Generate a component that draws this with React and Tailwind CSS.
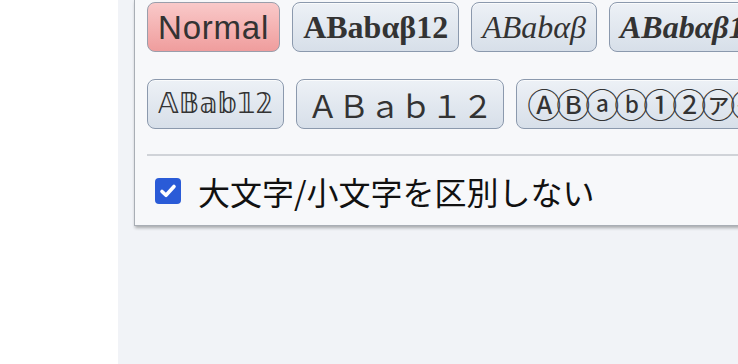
import React from "react";

const btn =
  "shrink-0 h-[50px] rounded-[8px] border border-[#8b99ad] bg-gradient-to-b from-[#edf1f6] to-[#d7dfe9] px-[10px] flex items-center text-[#333] leading-none whitespace-nowrap shadow-[inset_0_1px_0_rgba(255,255,255,0.7)]";

export default function App() {
  return (
    <div className="w-[738px] h-[364px] overflow-hidden bg-white flex">
      <div className="w-[118px] shrink-0 bg-white" />
      <div className="flex-1 bg-[#f1f3f7] pl-[16px] overflow-hidden">
        <div className="w-[900px] bg-[#f7f8fa] border border-t-0 border-[#a9aeb5] shadow-[1px_2px_3px_rgba(0,0,0,0.3)] pl-[12px] pt-[2px] pb-[18px]">
          <div className="flex gap-[12px]">
            <div
              className={
                "shrink-0 h-[50px] rounded-[8px] border border-[#9a9eab] bg-gradient-to-b from-[#f9c9c9] to-[#ef9d9d] px-[10px] flex items-center text-[#333] leading-none whitespace-nowrap text-[33px]"
              }
              style={{ fontFamily: '"Liberation Sans", Arial, sans-serif' }}
            >
              <span className="tracking-[0.8px]">Normal</span>
            </div>
            <div
              className={btn + " text-[32px] font-bold"}
              style={{ fontFamily: '"Liberation Serif", "DejaVu Serif", serif' }}
            >
              ABabαβ12
            </div>
            <div
              className={btn + " text-[32px] italic"}
              style={{ fontFamily: '"Liberation Serif", "DejaVu Serif", serif' }}
            >
              ABabαβ
            </div>
            <div
              className={btn + " text-[32px] italic font-bold"}
              style={{ fontFamily: '"Liberation Serif", "DejaVu Serif", serif' }}
            >
              ABabαβ12
            </div>
          </div>
          <div className="flex gap-[12px] mt-[27px]">
            <div
              className={btn + " text-[28px]"}
              style={{ fontFamily: '"DejaVu Sans", "Noto Sans", sans-serif' }}
            >
              𝔸𝔹𝕒𝕓𝟙𝟚
            </div>
            <div
              className={btn + " text-[31px]"}
              style={{ fontFamily: '"Noto Sans CJK JP", sans-serif' }}
            >
              ＡＢａｂ１２
            </div>
            <div
              className={btn + " text-[34px] tracking-[-5px] px-[8px]"}
              style={{ fontFamily: '"Noto Sans CJK JP", "DejaVu Sans", sans-serif' }}
            >
              ⒶⒷⓐⓑ①②㋐㋑
            </div>
          </div>
          <div className="h-[2px] bg-[#d0d3d8] mt-[25px]" />
          <label className="flex items-center mt-[19px] ml-[8px]">
            <span className="w-[26px] h-[26px] rounded-[4px] bg-[#2a5bd7] flex items-center justify-center shrink-0">
              <svg width="20" height="20" viewBox="0 0 20 20">
                <path
                  d="M4 10.5 L8 14.3 L16 5.5"
                  fill="none"
                  stroke="white"
                  strokeWidth="3.6"
                  strokeLinecap="round"
                  strokeLinejoin="round"
                />
              </svg>
            </span>
            <span
              className="ml-[17px] text-[32px] text-[#111] leading-none"
              style={{ fontFamily: '"Noto Sans CJK JP", sans-serif' }}
            >
              大文字/小文字を区別しない
            </span>
          </label>
        </div>
      </div>
    </div>
  );
}
